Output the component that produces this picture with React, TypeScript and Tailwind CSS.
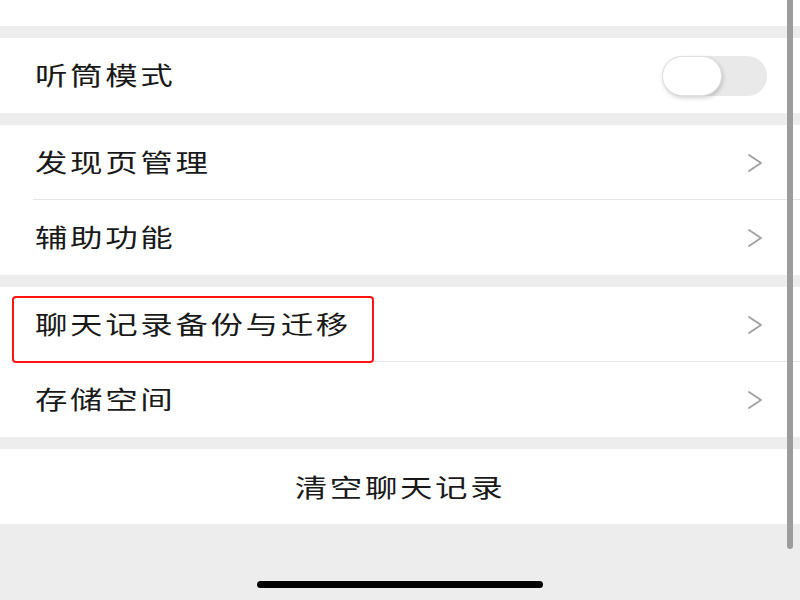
const font = { fontFamily: '"Noto Sans CJK SC", "Noto Sans", sans-serif' }

function Label({ text }: { text: string }) {
  return (
    <span className="inline-block origin-left scale-x-[1.3] text-[25px] leading-none tracking-[2px] text-[#191919]">
      {text}
    </span>
  )
}

function Chevron() {
  return (
    <svg width="16" height="20" viewBox="0 0 16 20" fill="none" className="text-[#a0a0a0]">
      <polyline points="2,2 14,10 2,18" stroke="currentColor" strokeWidth="1.8" strokeLinecap="round" strokeLinejoin="round" />
    </svg>
  )
}

function Row({ text, divider }: { text: string; divider?: boolean }) {
  return (
    <div className="relative flex h-[75px] items-center bg-white pl-[35px] pr-[37px]">
      <div className="flex-1">
        <Label text={text} />
      </div>
      <Chevron />
      {divider && <div className="absolute bottom-0 left-[33px] right-0 h-px bg-[#e6e6e6]" />}
    </div>
  )
}

export default function App() {
  return (
    <div className="relative flex h-[600px] w-full flex-col overflow-hidden bg-[#ededed]" style={font}>
      <div className="h-[26px] bg-white" />

      {/* 听筒模式 */}
      <div className="mt-3 flex h-[75px] items-center bg-white pl-[35px] pr-[33px]">
        <div className="flex-1">
          <Label text="听筒模式" />
        </div>
        <div className="flex h-[40px] w-[105px] items-center rounded-full bg-[#e9e9e9]">
          <div className="h-[40px] w-[60px] rounded-full border border-[#e0e0e0] bg-white shadow-[1px_2px_4px_rgba(0,0,0,0.18)]" />
        </div>
      </div>

      <div className="mt-3 flex flex-col">
        <Row text="发现页管理" divider />
        <Row text="辅助功能" />
      </div>

      <div className="relative mt-3 flex flex-col">
        <Row text="聊天记录备份与迁移" divider />
        <Row text="存储空间" />
        <div className="absolute left-[12px] top-[9px] h-[67px] w-[362px] rounded-[4px] border-2 border-[#ff1414]" />
      </div>

      <div className="mt-3 flex h-[75px] items-center justify-center bg-white">
        <span className="inline-block scale-x-[1.3] text-[25px] leading-none tracking-[2px] text-[#191919]">
          清空聊天记录
        </span>
      </div>

      <div className="mx-auto mt-[57px] h-[7px] w-[286px] rounded-full bg-black" />

      {/* scrollbar */}
      <div className="absolute right-[7px] top-0 h-[549px] w-[6px] rounded-b-full bg-[#9c9c9c]" />
    </div>
  )
}
